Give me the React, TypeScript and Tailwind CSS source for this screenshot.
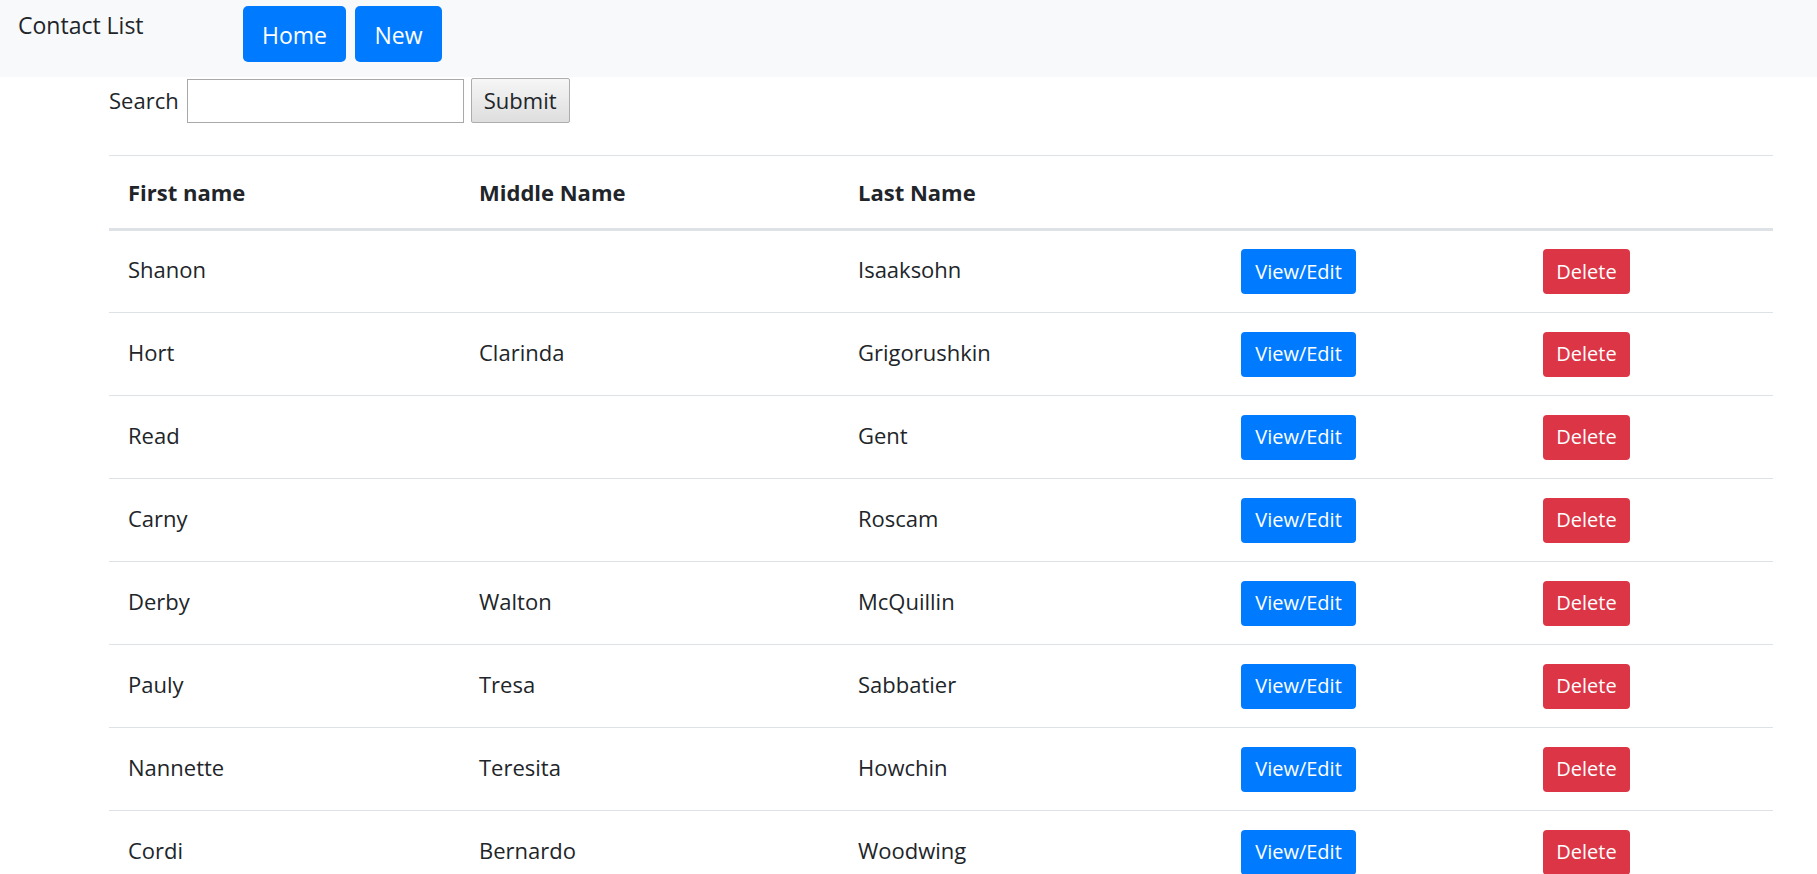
import { useState } from 'react'

type Contact = {
  id: number
  first: string
  middle: string
  last: string
}

const contacts: Contact[] = [
  { id: 1, first: 'Shanon', middle: '', last: 'Isaaksohn' },
  { id: 2, first: 'Hort', middle: 'Clarinda', last: 'Grigorushkin' },
  { id: 3, first: 'Read', middle: '', last: 'Gent' },
  { id: 4, first: 'Carny', middle: '', last: 'Roscam' },
  { id: 5, first: 'Derby', middle: 'Walton', last: 'McQuillin' },
  { id: 6, first: 'Pauly', middle: 'Tresa', last: 'Sabbatier' },
  { id: 7, first: 'Nannette', middle: 'Teresita', last: 'Howchin' },
  { id: 8, first: 'Cordi', middle: 'Bernardo', last: 'Woodwing' },
]

export default function App() {
  const [query, setQuery] = useState('')

  return (
    <div className="min-h-screen bg-white text-[#212529] font-['Open_Sans','Noto_Sans',sans-serif]">
      <nav className="flex h-[77px] items-start bg-[#f8f9fa]">
        <span className="ml-[18px] mt-[5px] w-[225px] text-[23px] leading-[40px]">Contact List</span>
        <div className="mt-[6px] flex gap-[9px]">
          <button className="h-[56px] w-[103px] rounded-[5px] bg-[#007bff] pt-[2px] text-[23px] text-white">Home</button>
          <button className="h-[56px] w-[87px] rounded-[5px] bg-[#007bff] pt-[2px] text-[23px] text-white">New</button>
        </div>
      </nav>

      <div className="ml-[109px] w-[1664px]">
        <form className="mt-px flex items-center" onSubmit={(e) => e.preventDefault()}>
          <label className="mr-[8px] text-[22px]">Search</label>
          <input
            value={query}
            onChange={(e) => setQuery(e.target.value)}
            className="h-[44px] w-[277px] border border-[#a9a9a9] px-1 text-[20px] outline-none"
          />
          <button
            type="submit"
            className="ml-[7px] h-[45px] w-[99px] rounded-[2px] border border-[#adadad] bg-gradient-to-b from-[#f6f6f6] to-[#dedede] text-[22px]"
          >
            Submit
          </button>
        </form>

        <table className="mt-[32px] w-full border-collapse text-left">
          <thead>
            <tr className="border-t border-[#dee2e6] text-[22px] font-bold">
              <th className="h-[74px] w-[351px] pl-[19px] align-middle">First name</th>
              <th className="w-[379px] pl-[19px] align-middle">Middle Name</th>
              <th className="w-[383px] pl-[19px] align-middle">Last Name</th>
              <th className="w-[302px]"></th>
              <th></th>
            </tr>
          </thead>
          <tbody className="border-t-[3px] border-[#dee2e6]">
            {contacts.map((c, i) => (
              <tr key={c.id} className={i === 0 ? '' : 'border-t border-[#dee2e6]'}>
                <td className="h-[83px] pl-[19px] pb-[4px] align-middle text-[22px]">{c.first}</td>
                <td className="pl-[19px] pb-[4px] align-middle text-[22px]">{c.middle}</td>
                <td className="pl-[19px] pb-[4px] align-middle text-[22px]">{c.last}</td>
                <td className="pl-[19px] align-middle">
                  <button className="h-[45px] w-[115px] rounded-[4px] bg-[#007bff] text-[20px] text-white">View/Edit</button>
                </td>
                <td className="pl-[19px] align-middle">
                  <button className="h-[45px] w-[87px] rounded-[4px] bg-[#dc3545] text-[20px] text-white">Delete</button>
                </td>
              </tr>
            ))}
          </tbody>
        </table>
      </div>
    </div>
  )
}
